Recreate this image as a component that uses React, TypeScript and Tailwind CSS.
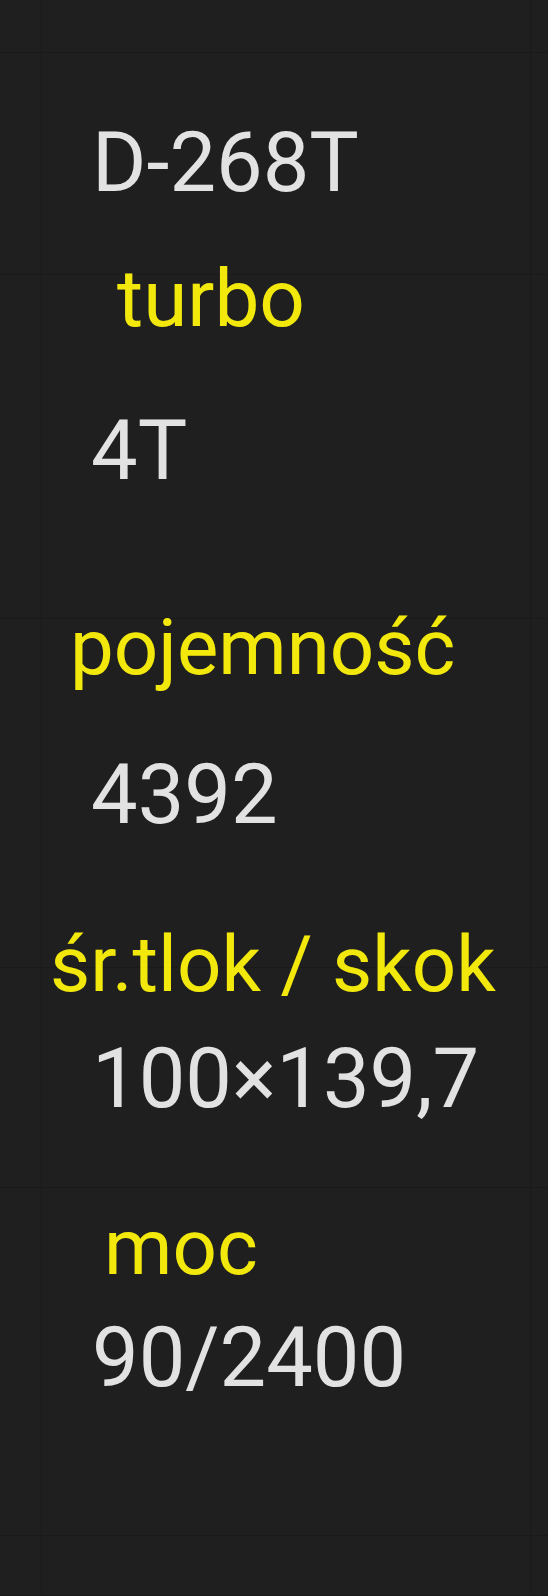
const font = { fontFamily: 'Roboto, "Noto Sans", sans-serif' };

type Line = { text: string; kind: 'label' | 'value'; className: string };

type Row = { height: string; lines: Line[] };

const rows: Row[] = [
  { height: 'h-[53px]', lines: [] },
  { height: 'h-[222px]', lines: [{ text: 'D-268T', kind: 'value', className: 'mt-[68px] pl-[50px]' }] },
  {
    height: 'h-[344px]',
    lines: [
      { text: 'turbo', kind: 'label', className: '-mt-[16px] pl-[75px] text-[80px]' },
      { text: '4T', kind: 'value', className: 'mt-[70px] pl-[49px]' },
    ],
  },
  {
    height: 'h-[349px]',
    lines: [
      { text: 'pojemność', kind: 'label', className: '-mt-[10px] pl-[28px] text-[78px]' },
      { text: '4392', kind: 'value', className: 'mt-[66px] pl-[49px]' },
    ],
  },
  {
    height: 'h-[220px]',
    lines: [
      { text: 'śr.tlok / skok', kind: 'label', className: '-mt-[42px] pl-[8px] text-[78px]' },
      { text: '100×139,7', kind: 'value', className: 'mt-[33px] pl-[50px]' },
    ],
  },
  {
    height: 'h-[348px]',
    lines: [
      { text: 'moc', kind: 'label', className: 'mt-[21px] pl-[62px] text-[78px]' },
      { text: '90/2400', kind: 'value', className: 'mt-[29px] pl-[50px]' },
    ],
  },
  { height: 'h-[60px]', lines: [] },
];

export default function App() {
  return (
    <div className="min-h-[1596px] w-[548px] overflow-hidden bg-[#1f1f1f]" style={font}>
      {rows.map((row, i) => (
        <div key={i} className={`flex ${row.height} border-b border-[#1a1a1a]`}>
          <div className="w-[42px] shrink-0 border-r border-[#1a1a1a]" />
          <div className="flex flex-1 flex-col border-r border-[#1a1a1a]">
            {row.lines.map((line) => (
              <p
                key={line.text}
                className={`${line.className} whitespace-nowrap leading-none ${
                  line.kind === 'label' ? 'text-[#f2e80c]' : 'text-[83px] text-[#e2e2e2]'
                }`}
              >
                {line.text}
              </p>
            ))}
          </div>
          <div className="w-[17px] shrink-0" />
        </div>
      ))}
    </div>
  );
}
